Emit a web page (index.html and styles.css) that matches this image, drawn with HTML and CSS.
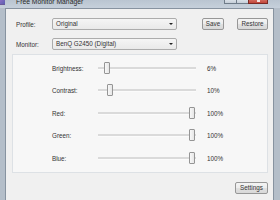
FILE: index.html
```html
<!DOCTYPE html>
<html>
<head>
<meta charset="utf-8">
<link rel="stylesheet" href="styles.css">
</head>
<body>
<div class="win">
  <div class="titlebar">
    <span class="appicon"></span>
    <span class="title">Free Monitor Manager</span>
    <div class="caption">
      <span class="cb"></span>
      <span class="cb"></span>
      <span class="cb close"><span class="x"></span></span>
    </div>
  </div>
  <div class="client">
    <div class="row first">
      <span class="lbl">Profile:</span>
      <div class="combo">Original<span class="arrow"></span></div>
      <div class="btn save">Save</div>
      <div class="btn restore">Restore</div>
    </div>
    <div class="row second">
      <span class="lbl">Monitor:</span>
      <div class="combo">BenQ G2450 (Digital)<span class="arrow"></span></div>
    </div>
    <div class="panel">
      <div class="srow">
        <span class="slbl">Brightness:</span>
        <div class="track"><span class="thumb" style="left:5.5px"></span></div>
        <span class="val">6%</span>
      </div>
      <div class="srow">
        <span class="slbl">Contrast:</span>
        <div class="track"><span class="thumb" style="left:9.2px"></span></div>
        <span class="val">10%</span>
      </div>
      <div class="srow">
        <span class="slbl">Red:</span>
        <div class="track"><span class="thumb" style="left:91px"></span></div>
        <span class="val">100%</span>
      </div>
      <div class="srow">
        <span class="slbl">Green:</span>
        <div class="track"><span class="thumb" style="left:91px"></span></div>
        <span class="val">100%</span>
      </div>
      <div class="srow">
        <span class="slbl">Blue:</span>
        <div class="track"><span class="thumb" style="left:91px"></span></div>
        <span class="val">100%</span>
      </div>
    </div>
    <div class="footer">
      <div class="btn settings">Settings</div>
    </div>
  </div>
</div>
</body>
</html>
```

FILE: styles.css
```css
html, body {
  margin: 0;
  padding: 0;
}
body {
  width: 280px;
  height: 200px;
  overflow: hidden;
  background: #b4bec9;
  font-family: "Liberation Sans", Arial, sans-serif;
  font-size: 6.3px;
  color: #333;
}
.win {
  display: flex;
  flex-direction: column;
  height: 200px;
}
.titlebar {
  height: 8px;
  display: flex;
  align-items: flex-start;
  background: linear-gradient(#bac5d1, #c6d0db);
  overflow: hidden;
}
.appicon {
  width: 5px;
  height: 4px;
  background: linear-gradient(135deg, #8a6fc4, #5b5fb0);
  border-bottom: 1px solid #6a5a9a;
}
.title {
  margin-left: 11px;
  margin-top: -2px;
  font-size: 6.8px;
  line-height: 8px;
  color: #2a2a2a;
  white-space: nowrap;
}
.caption {
  margin-left: auto;
  margin-right: 12px;
  display: flex;
}
.cb {
  width: 11px;
  height: 3px;
  border: 1px solid #6f7c89;
  border-top: none;
  background: linear-gradient(#d9e0e7, #c5ced8);
  margin-right: -1px;
}
.cb.close {
  width: 18px;
  background: linear-gradient(#d1695c, #c2453a);
  border-color: #7a2a24;
  display: flex;
  justify-content: center;
  margin-right: 0;
}
.cb.close .x {
  width: 3px;
  height: 2px;
  background: #f4e4e2;
}
.client {
  flex: 1;
  margin: 0 6px 0 5px;
  border: 1px solid #8793a0;
  border-bottom: none;
  background: #f0f0f0;
}
.row {
  height: 12px;
  display: flex;
  align-items: center;
}
.row.first {
  margin-top: 9px;
}
.row.second {
  margin-top: 8px;
}
.lbl {
  margin-left: 10px;
  width: 36px;
  flex: none;
}
.combo {
  position: relative;
  width: 125px;
  height: 12px;
  box-sizing: border-box;
  border: 1px solid #acacac;
  border-radius: 2px;
  background: linear-gradient(#f5f5f5, #e9e9e9);
  padding-left: 3px;
  line-height: 10px;
  white-space: nowrap;
}
.arrow {
  position: absolute;
  right: 3px;
  top: 4px;
  width: 0;
  height: 0;
  border-left: 2px solid transparent;
  border-right: 2px solid transparent;
  border-top: 2px solid #222;
}
.btn {
  height: 12px;
  box-sizing: border-box;
  border: 1px solid #979797;
  border-radius: 2px;
  background: linear-gradient(#f4f4f4 0%, #ececec 50%, #e0e0e0 51%, #d8d8d8 100%);
  text-align: center;
  line-height: 10px;
  white-space: nowrap;
}
.btn.save {
  margin-left: 25px;
  width: 22px;
}
.btn.restore {
  margin-left: 13px;
  width: 31px;
}
.panel {
  margin: 4px 5px 0 6px;
  border: 1px solid #dde1e5;
  background: #f7f7f7;
  padding: 1.75px 0 2.75px 0;
}
.srow {
  height: 22.5px;
  display: flex;
  align-items: center;
}
.slbl {
  margin-left: 39px;
  width: 46px;
  flex: none;
}
.track {
  position: relative;
  width: 98px;
  height: 2px;
  background: #dadada;
  border-bottom: 1px solid #fbfbfb;
  flex: none;
}
.thumb {
  position: absolute;
  top: -5px;
  width: 6px;
  height: 12px;
  box-sizing: border-box;
  border: 1px solid #959595;
  border-radius: 1px;
  background: linear-gradient(90deg, #f8f8f8, #e6e6e6);
}
.val {
  margin-left: 11px;
}
.footer {
  display: flex;
  justify-content: flex-end;
  margin: 9px 5px 0 0;
}
.btn.settings {
  width: 33px;
}
```
